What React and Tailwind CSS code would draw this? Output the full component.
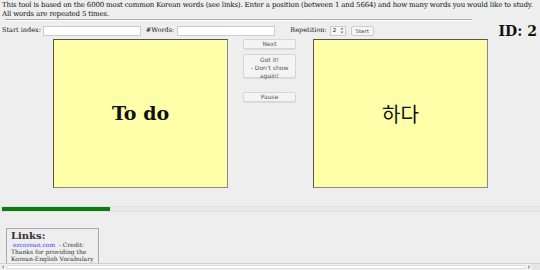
import React from 'react';

// Flashcard study page: intro text, controls row, two cards and a progress bar
const serif = "font-['DejaVu_Serif',serif]";
const sans = "font-['DejaVu_Sans',sans-serif]";

const SideButton = ({ children, className = '' }) => (
  <button className={`w-[53px] bg-[#f4f4f4] border border-[#d6d6d6] rounded-[2px] text-[6px] leading-[8px] text-[#555] shadow-[0_1px_0_#ddd] ${sans} ${className}`}>
    {children}
  </button>
);

const App = () => {
  return (
    <div className={`relative w-[540px] h-[270px] overflow-hidden bg-[#eeeeee] text-[#111] ${serif}`}>
      {/* Intro text */}
      <p className="px-[2px] pt-[1px] text-[7px] leading-[8.5px] whitespace-nowrap tracking-[-0.15px]">
        This tool is based on the 6000 most common Korean words (see links). Enter a position (between 1 and 5664) and how many words you would like to study.
        <br />
        All words are repeated 5 times.
      </p>
      <div className="mx-[5px] mt-[1px] w-[467px] h-[2px] border-t border-[#aaa] border-b border-b-[#fff]" />

      {/* Controls row */}
      <div className="flex items-center h-[13px] mt-[3px] pl-[2px] text-[6.5px]">
        <span>Start index:</span>
        <div className="ml-[2px] w-[98px] h-[10px] bg-white border border-[#ccc]" />
        <span className="ml-[5px]">#Words:</span>
        <div className="ml-[3px] w-[98px] h-[10px] bg-white border border-[#ccc]" />
        <span className="ml-[15px]">Repetition:</span>
        <div className={`ml-[3px] w-[16px] h-[10px] bg-[#f6f6f6] border border-[#ccc] flex items-center justify-between pl-[2px] pr-[1px] text-[5.5px] ${sans}`}>
          <span>2</span>
          <svg width="4" height="7" viewBox="0 0 4 7" fill="#777">
            <path d="M2 0.5L3.5 2.5H0.5z" />
            <path d="M2 6.5L3.5 4.5H0.5z" />
          </svg>
        </div>
        <button className={`ml-[5px] w-[23px] h-[10px] bg-[#f6f6f6] border border-[#ccc] rounded-[2px] text-[5.5px] text-[#555] ${sans}`}>Start</button>
        <span className="ml-auto mr-[3px] text-[14px] font-bold leading-[14px]">ID: 2</span>
      </div>

      {/* Cards and buttons */}
      <div className="flex items-start mt-[2px] pl-[53px]">
        <div className="w-[175px] h-[149px] bg-[#ffffaa] border border-[#555] border-r-[#888] border-b-[#888] flex items-center justify-center">
          <span className="text-[19px] font-bold">To do</span>
        </div>
        <div className="ml-[15px] flex flex-col">
          <SideButton className="h-[10px]">Next</SideButton>
          <SideButton className="mt-[5px] h-[24px] py-[1px]">Got it!<br />- Don't show<br />again!</SideButton>
          <SideButton className="mt-[14px] h-[10px]">Pause</SideButton>
        </div>
        <div className="ml-[17px] w-[175px] h-[149px] bg-[#ffffaa] border border-[#555] border-r-[#888] border-b-[#888] flex items-center justify-center">
          <span className="text-[20px] font-['Noto_Sans_CJK_KR',sans-serif]">하다</span>
        </div>
      </div>

      {/* Progress bar */}
      <div className="mt-[18px] h-[6px] bg-[#e8e8e8] border-y border-[#e0e0e0]">
        <div className="ml-[2px] w-[108px] h-full bg-[#0a7d0a]" />
      </div>

      {/* Links box */}
      <div className="ml-[6px] mt-[16px] w-[93px] border border-[#aaa] px-[4px] pt-[2px] text-[6px] leading-[7px] text-[#333] whitespace-nowrap">
        <div className="text-[10px] font-bold leading-[10px] text-[#333]">Links:</div>
        <div>
          <span className="ml-[2px] text-[#3a3aff]">ezcorean.com</span> &nbsp;- Credit:
        </div>
        <div>Thanks for providing the</div>
        <div>Korean-English Vocabulary</div>
        <div>and the word list</div>
      </div>

      {/* Horizontal scrollbar overlay */}
      <div className="absolute left-0 bottom-0 w-full h-[7px] bg-[#f0f0f0] border-t border-[#cfcfcf] flex items-center">
        <svg width="6" height="6" viewBox="0 0 6 6" fill="#aaa"><path d="M1.5 3L4 1v4z" /></svg>
        <div className="flex-1 h-[4px] border border-[#ddd] bg-white rounded-[2px]" />
        <svg width="6" height="6" viewBox="0 0 6 6" fill="#aaa"><path d="M4.5 3L2 1v4z" /></svg>
        <div className="w-[8px] h-full bg-[#e6e6e6]" />
      </div>
    </div>
  );
};

export default App;
